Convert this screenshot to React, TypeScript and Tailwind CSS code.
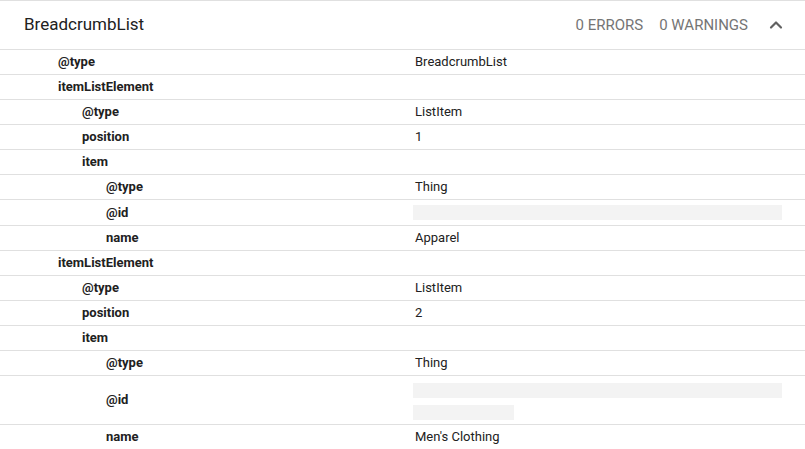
import { ChevronUp } from 'lucide-react';

type Row = {
  key: string;
  level: number;
  value?: string;
  bars?: number[];
};

const rows: Row[] = [
  { key: '@type', level: 0, value: 'BreadcrumbList' },
  { key: 'itemListElement', level: 0 },
  { key: '@type', level: 1, value: 'ListItem' },
  { key: 'position', level: 1, value: '1' },
  { key: 'item', level: 1 },
  { key: '@type', level: 2, value: 'Thing' },
  { key: '@id', level: 2, bars: [369] },
  { key: 'name', level: 2, value: 'Apparel' },
  { key: 'itemListElement', level: 0 },
  { key: '@type', level: 1, value: 'ListItem' },
  { key: 'position', level: 1, value: '2' },
  { key: 'item', level: 1 },
  { key: '@type', level: 2, value: 'Thing' },
  { key: '@id', level: 2, bars: [369, 101] },
  { key: 'name', level: 2, value: "Men's Clothing" }
];

const indent = ['pl-[58px]', 'pl-[82px]', 'pl-[106px]'];

function PropertyRow({ row }: { row: Row }) {
  return (
    <div className="flex border-b border-[#e0e0e0]">
      <div className={`flex w-[413px] shrink-0 items-center text-[13px] font-bold leading-6 text-[#212121] ${indent[row.level]}`}>
        {row.key}
      </div>
      <div className="flex min-h-6 flex-1 items-center">
        {row.bars ? (
          <div className={`flex flex-col gap-[7px] ${row.bars.length > 1 ? 'pt-[7px] pb-[4px]' : 'py-[5px]'}`}>
            {row.bars.map((w, i) => (
              <div key={i} className="h-[15px] bg-[#f3f3f3]" style={{ width: w }} />
            ))}
          </div>
        ) : (
          <span className="pl-[2px] text-[13px] leading-6 text-[#212121]">{row.value}</span>
        )}
      </div>
    </div>
  );
}

export default function App() {
  return (
    <div className="min-h-screen w-[805px] bg-white font-['Roboto','Liberation_Sans',sans-serif]">
      <div className="border-t border-[#e0e0e0]">
        <div className="flex h-[49px] items-center border-b border-[#e0e0e0] pl-6 pr-[17px]">
          <h2 className="flex-1 text-[17px] font-normal text-[#212121]">BreadcrumbList</h2>
          <span className="text-[15px] text-[#757575]">0 ERRORS</span>
          <span className="ml-4 text-[15px] text-[#757575]">0 WARNINGS</span>
          <button type="button" className="ml-4 flex h-6 w-6 items-center justify-center text-[#616161]">
            <ChevronUp className="h-5 w-5" strokeWidth={2.6} />
          </button>
        </div>
        {rows.map((row, i) => (
          <PropertyRow key={i} row={row} />
        ))}
      </div>
    </div>
  );
}
